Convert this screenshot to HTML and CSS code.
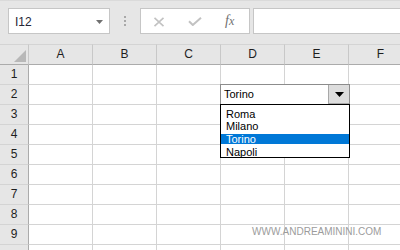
FILE: index.html
```html
<!DOCTYPE html>
<html>
<head>
<meta charset="utf-8">
<link rel="stylesheet" href="styles.css">
</head>
<body>
<div class="app">
  <div class="toolbar">
    <div class="namebox">
      <span class="name">I12</span>
      <svg class="nb-arrow" width="7" height="4" viewBox="0 0 7 4"><polygon points="0,0 7,0 3.5,4" fill="#707070"/></svg>
    </div>
    <div class="grip"><i></i><i></i><i></i></div>
    <div class="fnbox">
      <svg class="ic-x" width="12" height="10" viewBox="0 0 12 10"><path d="M1.5 0.8 L10.5 9.2 M10.5 0.8 L1.5 9.2" stroke="#c2c2c2" stroke-width="1.6" fill="none"/></svg>
      <svg class="ic-check" width="14" height="9" viewBox="0 0 14 9"><path d="M1 4.2 L4.8 8 L13 0.8" stroke="#c2c2c2" stroke-width="2" fill="none"/></svg>
      <span class="fx">f<span class="fx-x">x</span></span>
    </div>
    <div class="formula"></div>
  </div>

  <div class="sheet">
    <div class="corner"><svg width="12" height="12" viewBox="0 0 12 12"><polygon points="12,0 12,12 0,12" fill="#b8b8b8"/></svg></div>
    <div class="colh">A</div><div class="colh">B</div><div class="colh">C</div><div class="colh">D</div><div class="colh">E</div><div class="colh">F</div>

    <div class="rowh">1</div><div class="cell"></div><div class="cell"></div><div class="cell"></div><div class="cell"></div><div class="cell"></div><div class="cell"></div>
    <div class="rowh">2</div><div class="cell"></div><div class="cell"></div><div class="cell"></div><div class="cell"></div><div class="cell"></div><div class="cell"></div>
    <div class="rowh">3</div><div class="cell"></div><div class="cell"></div><div class="cell"></div><div class="cell"></div><div class="cell"></div><div class="cell"></div>
    <div class="rowh">4</div><div class="cell"></div><div class="cell"></div><div class="cell"></div><div class="cell"></div><div class="cell"></div><div class="cell"></div>
    <div class="rowh">5</div><div class="cell"></div><div class="cell"></div><div class="cell"></div><div class="cell"></div><div class="cell"></div><div class="cell"></div>
    <div class="rowh">6</div><div class="cell"></div><div class="cell"></div><div class="cell"></div><div class="cell"></div><div class="cell"></div><div class="cell"></div>
    <div class="rowh">7</div><div class="cell"></div><div class="cell"></div><div class="cell"></div><div class="cell"></div><div class="cell"></div><div class="cell"></div>
    <div class="rowh">8</div><div class="cell"></div><div class="cell"></div><div class="cell"></div><div class="cell"></div><div class="cell"></div><div class="cell"></div>
    <div class="rowh">9</div><div class="cell"></div><div class="cell"></div><div class="cell"></div><div class="cell"></div><div class="cell"></div><div class="cell"></div>
    <div class="rowh"></div><div class="cell"></div><div class="cell"></div><div class="cell"></div><div class="cell"></div><div class="cell"></div><div class="cell"></div>
  </div>

  <div class="dropdown">
    <div class="combo">
      <span class="combo-text">Torino</span>
      <div class="combo-btn"><svg width="9" height="5" viewBox="0 0 9 5"><polygon points="0,0 9,0 4.5,5" fill="#000"/></svg></div>
    </div>
    <ul class="list">
      <li class="item">Roma</li>
      <li class="item">Milano</li>
      <li class="item selected">Torino</li>
      <li class="item">Napoli</li>
    </ul>
  </div>

  <div class="watermark">WWW.ANDREAMININI.COM</div>
</div>
</body>
</html>
```

FILE: styles.css
```css
* { box-sizing: border-box; }

html, body {
  margin: 0;
  padding: 0;
  background: #ffffff;
}

.app {
  position: relative;
  width: 400px;
  height: 250px;
  overflow: hidden;
  font-family: "Liberation Sans", Arial, sans-serif;
  color: #222222;
}

/* ---------- toolbar ---------- */
.toolbar {
  height: 44px;
  background: #e6e6e6;
  border-top: 1px solid #dadada;
  display: flex;
  align-items: flex-start;
  padding-top: 7px;
}

.namebox {
  margin-left: 8px;
  width: 102px;
  height: 26px;
  background: #ffffff;
  border: 1px solid #c6c6c6;
  display: flex;
  align-items: center;
  padding: 0 6px 0 6px;
}

.name {
  flex: 1;
  font-size: 12px;
  color: #262636;
  padding-top: 1px;
}

.nb-arrow { display: block; margin-top: 1px; }

.grip {
  margin-left: 14px;
  width: 2px;
  height: 26px;
  display: flex;
  flex-direction: column;
  justify-content: center;
  gap: 2px;
  padding-bottom: 1px;
}

.grip i {
  display: block;
  width: 2px;
  height: 2px;
  background: #a8a8a8;
}

.fnbox {
  margin-left: 14px;
  width: 110px;
  height: 26px;
  background: #ffffff;
  border: 1px solid #c6c6c6;
  display: flex;
  align-items: center;
  padding-left: 12px;
}

.ic-x { display: block; margin-top: 1px; }
.ic-check { display: block; margin-left: 23px; margin-top: 1px; }

.fx {
  margin-left: 23px;
  font-family: "Liberation Serif", "Times New Roman", serif;
  font-style: italic;
  font-size: 14px;
  color: #707070;
  line-height: 1;
}

.fx-x { font-size: 12px; }

.formula {
  margin-left: 3px;
  flex: 1;
  margin-right: -6px;
  height: 26px;
  background: #ffffff;
  border: 1px solid #c6c6c6;
}

/* ---------- sheet ---------- */
.sheet {
  display: grid;
  grid-template-columns: 29px repeat(6, 64px);
  grid-template-rows: 21px;
  grid-auto-rows: 20px;
  width: 413px;
}

.corner {
  background: #e6e6e6;
  border-top: 1px solid #d4d4d4;
  border-right: 1px solid #c8c8c8;
  border-bottom: 1px solid #ababab;
  display: flex;
  justify-content: flex-end;
  align-items: flex-end;
  padding: 0 2px 2px 0;
}

.corner svg { display: block; }

.colh {
  background: #e6e6e6;
  border-top: 1px solid #d4d4d4;
  border-right: 1px solid #c8c8c8;
  border-bottom: 1px solid #ababab;
  font-size: 12px;
  line-height: 19px;
  text-align: center;
  color: #1e1e1e;
}

.rowh {
  background: #e6e6e6;
  border-right: 1px solid #ababab;
  border-bottom: 1px solid #d4d4d4;
  font-size: 12px;
  line-height: 19px;
  text-align: center;
  color: #1e1e1e;
}

.cell {
  border-right: 1px solid #d4d4d4;
  border-bottom: 1px solid #d4d4d4;
}

/* ---------- data validation dropdown ---------- */
.dropdown {
  position: absolute;
  left: 220px;
  top: 84px;
  width: 130px;
}

.combo {
  height: 20px;
  background: #ffffff;
  border: 1px solid #8c8c8c;
  border-bottom: none;
  display: flex;
  align-items: stretch;
}

.combo-text {
  flex: 1;
  font-size: 11px;
  line-height: 19px;
  padding-left: 3px;
  color: #000000;
}

.combo-btn {
  width: 21px;
  background: #dddddd;
  border-left: 1px solid #a8a8a8;
  border-bottom: 1px solid #a8a8a8;
  display: flex;
  align-items: center;
  justify-content: center;
  padding-top: 1px;
}

.combo-btn svg { display: block; }

.list {
  list-style: none;
  margin: 0;
  background: #ffffff;
  border: 1px solid #000000;
  padding: 3.5px 0 0 0;
  height: 54px;
  display: flex;
  flex-direction: column;
  gap: 2.75px;
}

.item {
  height: 10px;
  line-height: 10px;
  font-size: 11px;
  padding-left: 5px;
  color: #000000;
}

.item.selected {
  background: #0078d7;
  color: #ffffff;
}

.watermark {
  position: absolute;
  left: 252px;
  top: 227px;
  font-size: 10px;
  line-height: 10px;
  color: #9c9c9c;
}
```
